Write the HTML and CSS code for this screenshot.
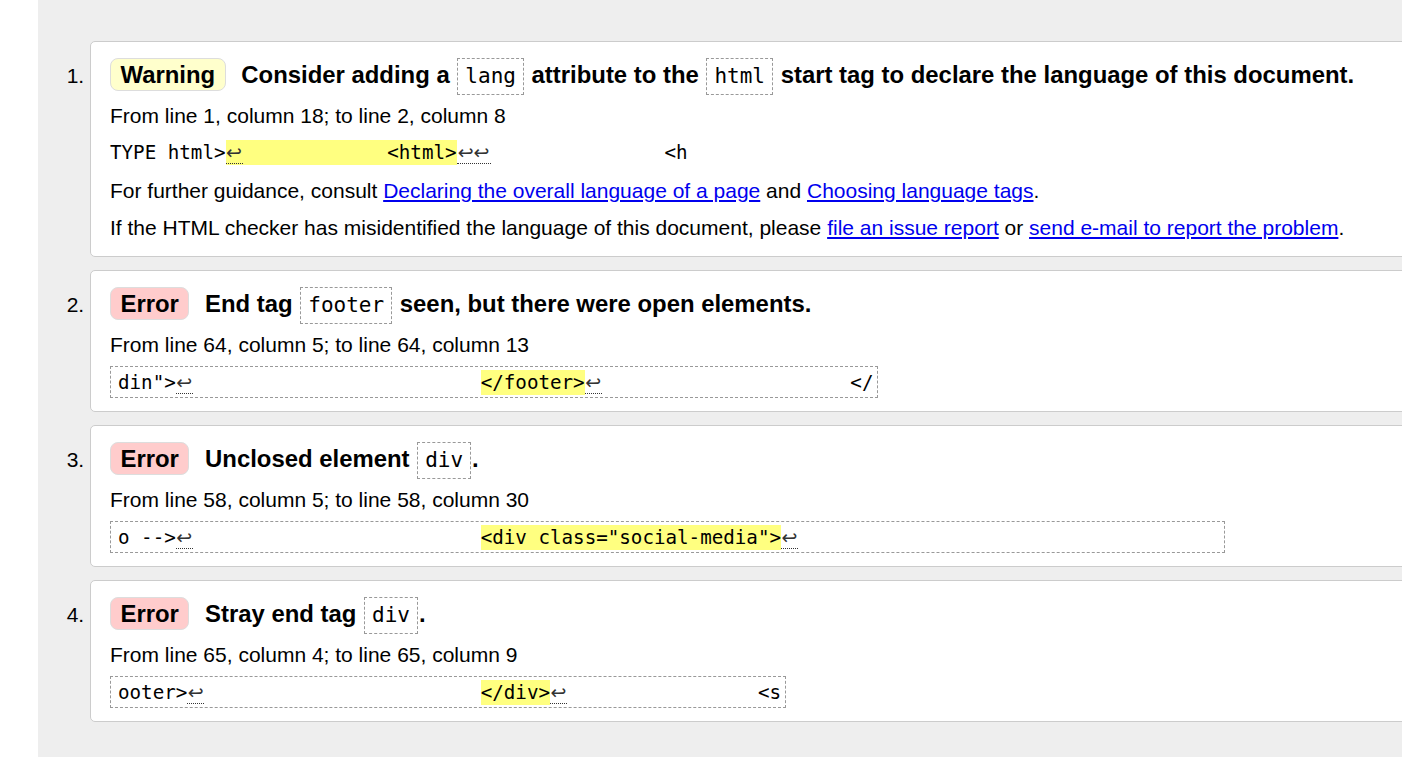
FILE: index.html
```html
<!DOCTYPE html>
<html lang="en">
<head>
<meta charset="utf-8">
<title>Validation results</title>
<link rel="stylesheet" href="styles.css">
</head>
<body>
<div class="page">
  <ol class="results">
    <li class="msg">
      <p class="head"><span class="badge warning">Warning</span> Consider adding a <code class="kw">lang</code> attribute to the <code class="kw">html</code> start tag to declare the language of this document.</p>
      <p class="loc">From line 1, column 18; to line 2, column 8</p>
      <p class="extract"><span class="plain">TYPE html&gt;<mark><span class="ret">↩</span>&#9;&#9;&lt;html&gt;</mark><span class="ret ret2">↩↩</span>&#9;&#9;&lt;h</span></p>
      <p class="note">For further guidance, consult <a href="#">Declaring the overall language of a page</a> and <a href="#">Choosing language tags</a>.</p>
      <p class="note last">If the HTML checker has misidentified the language of this document, please <a href="#">file an issue report</a> or <a href="#">send e-mail to report the problem</a>.</p>
    </li>
    <li class="msg">
      <p class="head"><span class="badge error">Error</span> End tag <code class="kw">footer</code> seen, but there were open elements.</p>
      <p class="loc">From line 64, column 5; to line 64, column 13</p>
      <p class="extract"><code class="box">din"&gt;<span class="ret">↩</span>&#9;&#9;&#9;&#9;<mark>&lt;/footer&gt;</mark><span class="ret">↩</span>&#9;&#9;&#9;&lt;/</code></p>
    </li>
    <li class="msg">
      <p class="head"><span class="badge error">Error</span> Unclosed element <code class="kw">div</code>.</p>
      <p class="loc">From line 58, column 5; to line 58, column 30</p>
      <p class="extract"><code class="box">o --&gt;<span class="ret">↩</span>&#9;&#9;&#9;&#9;<mark>&lt;div class="social-media"&gt;</mark><span class="ret">↩</span>&#9;&#9;&#9;&#9;&#9;</code></p>
    </li>
    <li class="msg">
      <p class="head"><span class="badge error">Error</span> Stray end tag <code class="kw">div</code>.</p>
      <p class="loc">From line 65, column 4; to line 65, column 9</p>
      <p class="extract"><code class="box">ooter&gt;<span class="ret">↩</span>&#9;&#9;&#9;<mark>&lt;/div&gt;</mark><span class="ret">↩</span>&#9;&#9;&#9;&lt;s</code></p>
    </li>
  </ol>
</div>
</body>
</html>
```
FILE: styles.css
```css
html, body {
  margin: 0;
  padding: 0;
  background: #fff;
  overflow: hidden;
}

.page {
  margin-left: 38px;
  background: #eeeeee;
  min-height: 100vh;
  padding-top: 41px;
  box-sizing: border-box;
}

.results {
  margin: 0 -30px 0 0;
  padding: 0 0 0 52px;
  list-style: decimal outside;
  font-family: "Liberation Sans", Arial, sans-serif;
  font-size: 21px;
  color: #000;
}

.msg {
  background: #fff;
  border: 1px solid #cccccc;
  border-radius: 5px;
  padding: 16px 20px 12px 19px;
  margin-bottom: 13px;
}

.msg p {
  margin: 0;
}

.head {
  font-size: 23.9px;
  font-weight: bold;
  line-height: normal;
}

.badge {
  display: inline-block;
  line-height: 31px;
  padding: 0 9.5px;
  border: 1px solid #dddddd;
  border-radius: 8px;
  margin-right: 9px;
}

.badge.warning {
  background: #ffffcc;
}

.badge.error {
  background: #ffcccc;
}

.kw {
  display: inline-block;
  font-family: "DejaVu Sans Mono", monospace;
  font-size: 21px;
  font-weight: normal;
  line-height: 35px;
  padding: 0 7px;
  margin: 0 1px;
  border: 1px dashed #999999;
}

.loc {
  margin-top: 8px !important;
  line-height: 25px;
}

.extract {
  margin-top: 9px !important;
  font-family: "DejaVu Sans Mono", monospace;
  font-size: 19.2px;
  line-height: 32px;
  white-space: pre;
  tab-size: 8;
}

.box {
  display: inline-block;
  font-family: inherit;
  font-size: inherit;
  line-height: 28px;
  padding: 2px 4px 0 0;
  text-indent: 7px;
  border: 1px dashed #999999;
  white-space: pre;
  tab-size: 8;
}

mark {
  background: #ffff80;
  color: #000;
  padding: 1px 0;
}

.ret {
  display: inline-block;
  width: 17px;
  text-indent: 0;
  font-family: "DejaVu Sans", sans-serif;
  font-size: 19px;
  line-height: 22px;
  color: #333;
  border-bottom: 1px dotted #333;
  text-align: center;
}

.ret2 {
  width: 34px;
  letter-spacing: 0;
}

.note {
  margin-top: 9px !important;
  line-height: 25px;
}

.note + .note {
  margin-top: 12px !important;
}

.note.last {
  margin-bottom: 4px;
}

a {
  color: #0000ee;
  text-decoration: underline;
}
```
